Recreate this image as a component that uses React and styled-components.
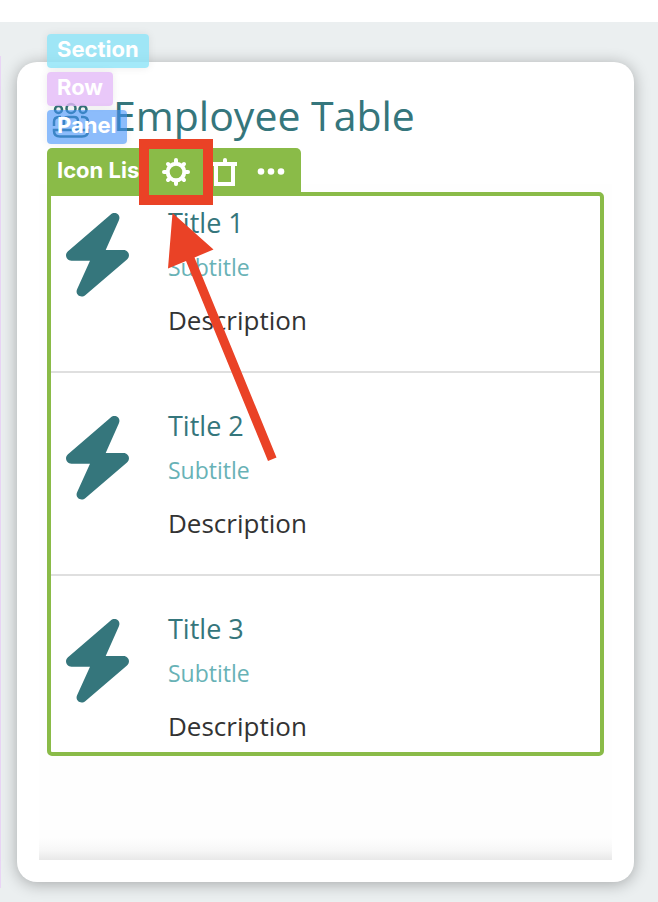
import React from 'react';
import styled, { createGlobalStyle } from 'styled-components';

const GlobalStyle = createGlobalStyle`
  * {
    box-sizing: border-box;
  }

  body {
    margin: 0;
    background-color: white;
    font-family: 'Open Sans', 'Noto Sans', sans-serif;
  }
`;

const Page = styled.main`
  margin-top: 22px;
  padding: 34px 0 14px;
  background-color: #ebeff0;
`;

const RowOutline = styled.div`
  padding: 6px 24px 6px 16px;
  border-left: 1px solid #e9d5f5;
`;

const Card = styled.section`
  padding: 25px 22px 22px;
  border-radius: 20px;
  box-shadow: 0 2px 16px rgba(0, 0, 0, 0.3);
  background-color: white;
`;

const Header = styled.header`
  display: flex;
  align-items: center;
  gap: 22px;
  padding-left: 12px;
  color: #35767c;
`;

const Title = styled.h1`
  margin: 0;
  font-size: 41px;
  font-weight: 400;
  line-height: 56px;
`;

const Body = styled.div`
  margin-top: 41px;
  padding: 8px 8px 104px;
  background: linear-gradient(to top, #e8e8e8, #f7f7f7 10px, #fefefe 22px);
`;

const Widget = styled.div`
  position: relative;
  border: 4px solid #8abb48;
  border-radius: 0 5px 5px 5px;
  background-color: white;
`;

const Overlay = styled.div`
  position: absolute;
  left: -4px;
  bottom: 100%;
  display: flex;
  flex-direction: column;
  align-items: flex-start;
  gap: 4px;
  font-family: Inter, sans-serif;
`;

const Tag = styled.button`
  height: 34px;
  padding: 0 10px 4px;
  border: 0;
  border-radius: 4px;
  box-shadow: 0 0 8px rgba(0, 0, 0, 0.08);
  background-color: ${({ $color }) => $color};
  color: white;
  font-family: inherit;
  font-size: 22px;
  font-weight: 700;
  line-height: 30px;
`;

const Toolbar = styled.div`
  display: flex;
  align-items: center;
  width: 254px;
  height: 48px;
  padding-left: 10px;
  border-radius: 5px 5px 0 0;
  background-color: #8abb48;
  color: white;
`;

const ToolbarLabel = styled.span`
  flex: none;
  width: 82px;
  padding-bottom: 4px;
  font-size: 22px;
  font-weight: 700;
  line-height: 44px;
  white-space: nowrap;
`;

const ToolButton = styled.button`
  display: flex;
  flex: none;
  align-items: center;
  justify-content: ${({ $align }) => $align || 'center'};
  width: ${({ $width }) => $width}px;
  height: 48px;
  padding: 0;
  border: 0;
  background: none;
  color: white;
`;

/* sits above the end of the label */
const SettingsButton = styled(ToolButton)`
  z-index: 1;
  height: 66px;
  border: 10px solid #ea4226;
  background-color: #8abb48;
`;

const List = styled.ul`
  margin: 0;
  padding: 0;
  list-style: none;
`;

const Item = styled.li`
  display: flex;
  gap: 39px;
  padding: 34px 15px 31px;
  border-bottom: 2px solid #dfdfdf;

  &:first-child {
    padding-top: 8px;
  }

  &:last-child {
    padding-bottom: 6px;
    border-bottom: 0;
  }
`;

const BoltIcon = styled.svg`
  flex: none;
  margin-top: 9px;
  fill: #35767c;
`;

const ItemTitle = styled.h2`
  margin: 0;
  color: #35767c;
  font-size: 27px;
  font-weight: 400;
  line-height: 38px;
`;

const Subtitle = styled.p`
  margin: 9px 0 17px;
  color: #68b2b6;
  font-size: 23px;
  line-height: 32px;
`;

const Description = styled.p`
  margin: 0;
  color: #333;
  font-size: 26px;
  line-height: 40px;
`;

const Pointer = styled.svg`
  position: absolute;
  top: 14px;
  left: 116px;
  fill: #ea4226;
  pointer-events: none;
`;

const tags = [
  { name: 'Section', color: 'rgba(140, 228, 248, 0.8)' },
  { name: 'Row', color: 'rgba(228, 186, 248, 0.8)' },
  { name: 'Panel', color: 'rgba(64, 144, 248, 0.6)' },
];

const items = [1, 2, 3];

const PeopleIcon = () => (
  <svg width="40" height="48" viewBox="0 0 40 48" fill="none" stroke="currentColor" strokeWidth="2.5">
    <circle cx="7.5" cy="18.5" r="3.5" />
    <circle cx="20" cy="17.5" r="4.5" />
    <circle cx="32" cy="18.5" r="3.5" />
    <path d="M3 35v-4q0-5 5-5h2M13 35v-5q0-4 4-4h6q4 0 4 4v5M30 26h2q5 0 5 5v4" />
    <path d="M3 39h34v1q0 5.5-6 5.5H9q-6 0-6-5.5z" />
  </svg>
);

const GearIcon = () => (
  <svg width="28" height="28" viewBox="0 0 28 28" fill="none" stroke="currentColor" strokeLinecap="round">
    <circle cx="14" cy="14" r="8.3" strokeWidth="4" />
    <path
      strokeWidth="4"
      d="M14 4V2M14 24v2M4 14H2M24 14h2M7 7l-1-1M21 7l1-1M7 21l-1 1M21 21l1 1"
    />
  </svg>
);

const TrashIcon = () => (
  <svg width="24" height="28" viewBox="0 0 24 28" fill="none" stroke="currentColor" strokeWidth="4">
    <path d="M0 6h24M3 6v20h17V6" />
    <path d="M12 5V2" strokeLinecap="round" />
  </svg>
);

const DotsIcon = () => (
  <svg width="28" height="8" viewBox="0 0 28 8" fill="currentColor">
    <circle cx="4" cy="3.5" r="3.3" />
    <circle cx="14" cy="3.5" r="3.3" />
    <circle cx="24" cy="3.5" r="3.3" />
  </svg>
);

const App = () => {
  return (
    <>
      <GlobalStyle />
      <Page>
        <RowOutline>
          <Card>
            <Header>
              <PeopleIcon />
              <Title>Employee Table</Title>
            </Header>
            <Body>
              <Widget>
                <List>
                  {items.map((n) => (
                    <Item key={n}>
                      <BoltIcon width="63" height="84" viewBox="0 0 63 84">
                        <path d="M44.7 1.5C49-2.2 55.5 1.8 52.8 7.5L39.7 37H57.5C62.5 37 65 43 61 46.5L19.5 82C15 86 8.5 81.5 11.2 76L24 47.7H5.5C.5 47.7-2 41.5 2 38.2Z" />
                      </BoltIcon>
                      <div>
                        <ItemTitle>Title {n}</ItemTitle>
                        <Subtitle>Subtitle</Subtitle>
                        <Description>Description</Description>
                      </div>
                    </Item>
                  ))}
                </List>
                <Overlay>
                  {tags.map((tag) => (
                    <Tag key={tag.name} type="button" $color={tag.color}>
                      {tag.name}
                    </Tag>
                  ))}
                  <Toolbar>
                    <ToolbarLabel>Icon List</ToolbarLabel>
                    <SettingsButton type="button" aria-label="Settings" $width={74}>
                      <GearIcon />
                    </SettingsButton>
                    <ToolButton type="button" aria-label="Delete" $width={36} $align="flex-start">
                      <TrashIcon />
                    </ToolButton>
                    <ToolButton type="button" aria-label="More" $width={44}>
                      <DotsIcon />
                    </ToolButton>
                  </Toolbar>
                </Overlay>
                <Pointer width="112" height="252" viewBox="0 0 112 252">
                  <path d="M5.5 3L46.5 39.5 27.5 47.5 109.5 247.5 101 251 19 51 1 58.5Z" />
                </Pointer>
              </Widget>
            </Body>
          </Card>
        </RowOutline>
      </Page>
    </>
  );
};

export default App;
